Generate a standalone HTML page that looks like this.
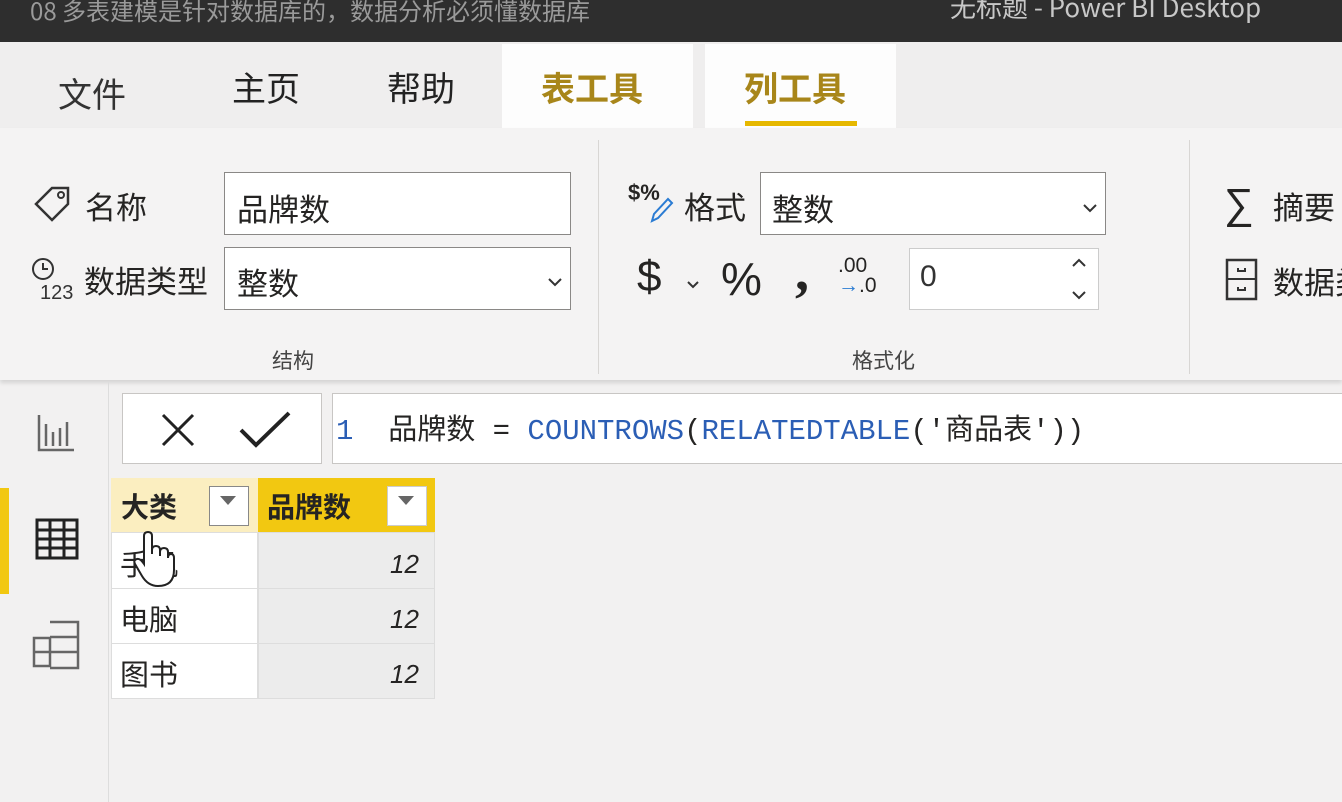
<!DOCTYPE html>
<html><head><meta charset="utf-8"><style>
*{margin:0;padding:0;box-sizing:border-box}
body{width:1342px;height:802px;overflow:hidden;background:#f2f1f1;font-family:"Liberation Sans","Noto Sans CJK SC",sans-serif;position:relative;color:#252423}
.a{position:absolute;white-space:nowrap}
.cn{font-family:"Noto Sans CJK SC",sans-serif}
.box{position:absolute;background:#fff;border:1px solid #8a8886}
</style></head><body>
<div class="a" style="left:0;top:0;width:1342px;height:42px;background:#2e2e2e"></div>
<div class="a cn" style="left:30px;top:-8px;font-size:24px;color:#9a9a9a">08 多表建模是针对数据库的，数据分析必须懂数据库</div>
<div class="a cn" style="left:950px;top:-12px;font-size:26px;color:#c8c8c8">无标题 - Power BI Desktop</div>
<div class="a" style="left:0;top:42px;width:1342px;height:86px;background:#efeeee"></div>
<div class="a" style="left:502px;top:44px;width:191px;height:84px;background:#fdfdfd"></div>
<div class="a" style="left:705px;top:44px;width:191px;height:84px;background:#fdfdfd"></div>
<div class="a cn" style="left:58px;top:68px;font-size:34px;color:#333">文件</div>
<div class="a cn" style="left:232px;top:62px;font-size:34px;color:#222">主页</div>
<div class="a cn" style="left:387px;top:62px;font-size:34px;color:#222">帮助</div>
<div class="a cn" style="left:541px;top:62px;font-size:34px;font-weight:bold;color:#a8861a">表工具</div>
<div class="a cn" style="left:744px;top:62px;font-size:34px;font-weight:bold;color:#a8861a">列工具</div>
<div class="a" style="left:745px;top:121px;width:112px;height:5px;background:#e6b800"></div>
<div class="a" style="left:0;top:128px;width:1342px;height:252px;background:#f4f3f3;box-shadow:0 3px 4px rgba(0,0,0,.12)"></div>
<div class="a" style="left:598px;top:140px;width:1px;height:234px;background:#d8d6d4"></div>
<div class="a" style="left:1189px;top:140px;width:1px;height:234px;background:#d8d6d4"></div>
<svg class="a" style="left:32px;top:184px" width="42" height="40" viewBox="0 0 42 40"><path d="M4 20 L20 4 H36 V20 L20 36 Z" fill="none" stroke="#333" stroke-width="2.5"/><circle cx="29" cy="11" r="3" fill="none" stroke="#333" stroke-width="2"/></svg>
<div class="a cn" style="left:85px;top:183px;font-size:31px">名称</div>
<div class="box" style="left:224px;top:172px;width:347px;height:63px"></div>
<div class="a cn" style="left:237px;top:185px;font-size:31px">品牌数</div>
<svg class="a" style="left:30px;top:256px" width="46" height="46"><circle cx="13" cy="13" r="10" fill="none" stroke="#333" stroke-width="2"/><path d="M13 7V13H18" stroke="#333" stroke-width="2" fill="none"/><text x="10" y="43" font-size="20" font-family="Liberation Sans" fill="#333">123</text></svg>
<div class="a cn" style="left:84px;top:257px;font-size:31px">数据类型</div>
<div class="box" style="left:224px;top:247px;width:347px;height:63px"></div>
<div class="a cn" style="left:237px;top:259px;font-size:31px">整数</div>
<svg class="a" style="left:547px;top:277px" width="16" height="10"><path d="M2 2L8 8L14 2" stroke="#333" stroke-width="2" fill="none"/></svg>
<div class="a cn" style="left:272px;top:345px;font-size:21px;color:#444">结构</div>
<div class="a" style="left:628px;top:180px;font-size:22px;font-weight:bold">$%</div>
<svg class="a" style="left:648px;top:195px" width="26" height="30"><path d="M4 26L6 19L20 4L24 8L10 23Z" fill="none" stroke="#2b7cd3" stroke-width="2"/></svg>
<div class="a cn" style="left:684px;top:183px;font-size:31px">格式</div>
<div class="box" style="left:760px;top:172px;width:346px;height:63px"></div>
<div class="a cn" style="left:772px;top:185px;font-size:31px">整数</div>
<svg class="a" style="left:1082px;top:203px" width="16" height="10"><path d="M2 2L8 8L14 2" stroke="#333" stroke-width="2" fill="none"/></svg>
<div class="a" style="left:637px;top:252px;font-size:44px">$</div>
<svg class="a" style="left:686px;top:280px" width="14" height="10"><path d="M2 2L7 7L12 2" stroke="#333" stroke-width="2" fill="none"/></svg>
<div class="a" style="left:721px;top:252px;font-size:46px">%</div>
<div class="a" style="left:795px;top:240px;font-size:56px;font-weight:bold;font-family:'Liberation Serif'">,</div>
<div class="a" style="left:838px;top:256px;font-size:21px;line-height:20px">.00<br><span style="color:#2b7cd3">→</span>.0</div>
<div class="box" style="left:909px;top:248px;width:190px;height:62px;border-color:#ccc"></div>
<div class="a" style="left:920px;top:260px;font-size:30px;color:#333">0</div>
<svg class="a" style="left:1070px;top:256px" width="18" height="46"><path d="M3 10L9 4L15 10M3 36L9 42L15 36" stroke="#333" stroke-width="2" fill="none"/></svg>
<div class="a cn" style="left:852px;top:345px;font-size:21px;color:#444">格式化</div>
<div class="a" style="left:1224px;top:180px;font-size:42px">∑</div>
<div class="a cn" style="left:1273px;top:183px;font-size:31px">摘要</div>
<svg class="a" style="left:1225px;top:258px" width="34" height="44"><rect x="2" y="2" width="29" height="39" fill="none" stroke="#333" stroke-width="2.5"/><path d="M2 21H31M13 10V13H20V10M13 29V32H20V29" stroke="#333" stroke-width="2" fill="none"/></svg>
<div class="a cn" style="left:1273px;top:258px;font-size:31px">数据类</div>
<div class="a" style="left:108px;top:382px;width:1px;height:420px;background:#ddd"></div>
<div class="a" style="left:0;top:488px;width:9px;height:106px;background:#f2c811"></div>
<svg class="a" style="left:36px;top:410px" width="40" height="44"><path d="M3 5V40H38M10 36V14M17 36V22M24 36V18M31 36V12" stroke="#666" stroke-width="2.5" fill="none"/></svg>
<svg class="a" style="left:35px;top:518px" width="44" height="42"><rect x="2" y="2" width="40" height="38" fill="none" stroke="#222" stroke-width="3"/><path d="M2 12H42M2 21H42M2 30H42M15 2V40M29 2V40" stroke="#222" stroke-width="3"/></svg>
<svg class="a" style="left:32px;top:620px" width="50" height="52"><path d="M2 18H18V46H2ZM2 32H18 M18 2H46V48H18 M18 17H46M18 32H46" stroke="#666" stroke-width="2.5" fill="none"/></svg>
<div class="box" style="left:122px;top:393px;width:200px;height:71px;border-color:#c8c6c4"></div>
<svg class="a" style="left:160px;top:412px" width="36" height="36"><path d="M3 3L33 33M33 3L3 33" stroke="#222" stroke-width="3"/></svg>
<svg class="a" style="left:238px;top:410px" width="54" height="40"><path d="M3 20L18 35L51 3" stroke="#222" stroke-width="4" fill="none"/></svg>
<div class="box" style="left:332px;top:393px;width:1020px;height:71px;border-color:#c8c6c4"></div>
<div class="a" style="left:336px;top:406px;font-size:29px;font-family:'Liberation Mono','Noto Sans CJK SC',monospace;white-space:pre"><span style="color:#2b5eb5">1</span>  品牌数 = <span style="color:#2b5eb5">COUNTROWS</span>(<span style="color:#2b5eb5">RELATEDTABLE</span>('商品表'))</div>
<div class="a" style="left:111px;top:478px;width:147px;height:54px;background:#fbeec0"></div>
<div class="a" style="left:258px;top:478px;width:177px;height:54px;background:#f2c811"></div>
<div class="a cn" style="left:121px;top:486px;font-size:28px;font-weight:bold">大类</div>
<div class="a cn" style="left:267px;top:486px;font-size:28px;font-weight:bold">品牌数</div>
<div class="box" style="left:209px;top:486px;width:40px;height:40px;border-color:#888"></div>
<div class="a" style="left:220px;top:496px;border:8px solid transparent;border-top:9px solid #666"></div>
<div class="box" style="left:387px;top:486px;width:40px;height:40px;border-color:#ccc"></div>
<div class="a" style="left:398px;top:496px;border:8px solid transparent;border-top:9px solid #666"></div>
<div class="a" style="left:111px;top:532px;width:147px;height:167px;background:#fff;border:1px solid #ddd"></div>
<div class="a" style="left:258px;top:532px;width:177px;height:167px;background:#ececec;border:1px solid #ddd"></div>
<div class="a" style="left:111px;top:588px;width:324px;height:1px;background:#ddd"></div>
<div class="a" style="left:111px;top:643px;width:324px;height:1px;background:#ddd"></div>
<div class="a cn" style="left:120px;top:542px;font-size:29px">手机</div>
<div class="a cn" style="left:120px;top:597px;font-size:29px">电脑</div>
<div class="a cn" style="left:120px;top:652px;font-size:29px">图书</div>
<div class="a" style="left:390px;top:549px;font-size:26px;font-style:italic">12</div>
<div class="a" style="left:390px;top:604px;font-size:26px;font-style:italic">12</div>
<div class="a" style="left:390px;top:659px;font-size:26px;font-style:italic">12</div>
<svg class="a" style="left:132px;top:530px" width="44" height="58"><path d="M12 34V6Q12 2 16 2Q20 2 20 6V24V20Q20 16 24 16Q28 16 28 20V26V22Q28 18 32 18Q36 18 36 22V28Q36 24 39 24Q42 24 42 28V40Q42 56 26 56Q16 56 10 46L3 34Q1 30 5 29Q8 28 12 34Z" fill="#fff" stroke="#222" stroke-width="2"/></svg>
</body></html>
